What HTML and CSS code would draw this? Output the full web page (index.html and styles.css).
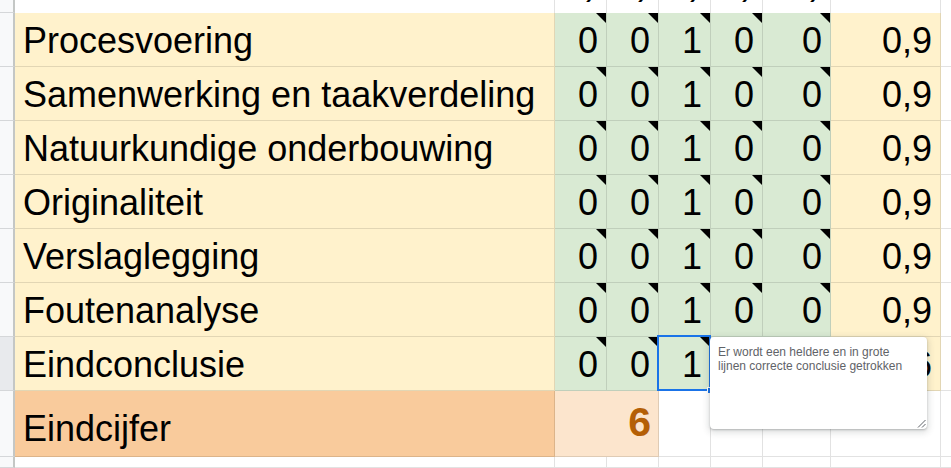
FILE: index.html
```html
<!DOCTYPE html>
<html lang="nl">
<head>
<meta charset="utf-8">
<title>Beoordeling</title>
<link rel="stylesheet" href="styles.css">
</head>
<body>
<div class="sheet">
  <!-- header row (mostly scrolled out) -->
  <div class="gut"></div>
  <div class="c top top-y"></div>
  <div class="c top top-g num"><span>1)</span></div>
  <div class="c top top-g num"><span>2)</span></div>
  <div class="c top top-g num"><span>3)</span></div>
  <div class="c top top-g num"><span>4)</span></div>
  <div class="c top top-g num"><span>5)</span></div>
  <div class="c top top-y"></div>
  <div class="c top"></div>

  <div class="gut"></div>
  <div class="c y lbl">Procesvoering</div>
  <div class="c g num">0<i class="tri"></i></div>
  <div class="c g num">0<i class="tri"></i></div>
  <div class="c g num">1<i class="tri"></i></div>
  <div class="c g num">0<i class="tri"></i></div>
  <div class="c g num">0<i class="tri"></i></div>
  <div class="c y num">0,9</div>
  <div class="c w"></div>

  <div class="gut"></div>
  <div class="c y lbl">Samenwerking en taakverdeling</div>
  <div class="c g num">0<i class="tri"></i></div>
  <div class="c g num">0<i class="tri"></i></div>
  <div class="c g num">1<i class="tri"></i></div>
  <div class="c g num">0<i class="tri"></i></div>
  <div class="c g num">0<i class="tri"></i></div>
  <div class="c y num">0,9</div>
  <div class="c w"></div>

  <div class="gut"></div>
  <div class="c y lbl">Natuurkundige onderbouwing</div>
  <div class="c g num">0<i class="tri"></i></div>
  <div class="c g num">0<i class="tri"></i></div>
  <div class="c g num">1<i class="tri"></i></div>
  <div class="c g num">0<i class="tri"></i></div>
  <div class="c g num">0<i class="tri"></i></div>
  <div class="c y num">0,9</div>
  <div class="c w"></div>

  <div class="gut"></div>
  <div class="c y lbl">Originaliteit</div>
  <div class="c g num">0<i class="tri"></i></div>
  <div class="c g num">0<i class="tri"></i></div>
  <div class="c g num">1<i class="tri"></i></div>
  <div class="c g num">0<i class="tri"></i></div>
  <div class="c g num">0<i class="tri"></i></div>
  <div class="c y num">0,9</div>
  <div class="c w"></div>

  <div class="gut"></div>
  <div class="c y lbl">Verslaglegging</div>
  <div class="c g num">0<i class="tri"></i></div>
  <div class="c g num">0<i class="tri"></i></div>
  <div class="c g num">1<i class="tri"></i></div>
  <div class="c g num">0<i class="tri"></i></div>
  <div class="c g num">0<i class="tri"></i></div>
  <div class="c y num">0,9</div>
  <div class="c w"></div>

  <div class="gut"></div>
  <div class="c y lbl">Foutenanalyse</div>
  <div class="c g num">0<i class="tri"></i></div>
  <div class="c g num">0<i class="tri"></i></div>
  <div class="c g num">1<i class="tri"></i></div>
  <div class="c g num">0<i class="tri"></i></div>
  <div class="c g num">0<i class="tri"></i></div>
  <div class="c y num">0,9</div>
  <div class="c w"></div>

  <div class="gut gut-sel"></div>
  <div class="c y lbl">Eindconclusie</div>
  <div class="c g num">0<i class="tri"></i></div>
  <div class="c g num">0<i class="tri"></i></div>
  <div class="c g num">1<i class="tri"></i><b class="sel"><b class="handle"></b></b></div>
  <div class="c g num">0<i class="tri"></i></div>
  <div class="c g num">0<i class="tri"></i></div>
  <div class="c y num">0,6</div>
  <div class="c w"></div>

  <div class="gut"></div>
  <div class="c o lbl lbl-final">Eindcijfer</div>
  <div class="c lo num grade">6</div>
  <div class="c w"></div>
  <div class="c w"></div>
  <div class="c w"></div>
  <div class="c w"></div>
  <div class="c w"></div>

  <div class="gut"></div>
  <div class="c w"></div>
  <div class="c w"></div>
  <div class="c w"></div>
  <div class="c w"></div>
  <div class="c w"></div>
  <div class="c w"></div>
  <div class="c w"></div>
  <div class="c w"></div>

  <div class="note">
    <p class="note-text">Er wordt een heldere en in grote lijnen correcte conclusie getrokken</p>
    <svg class="grip" width="9" height="9" viewBox="0 0 9 9" aria-hidden="true">
      <path d="M8.5 1 L1 8.5 M8.5 5 L5 8.5" stroke="#5f6368" stroke-width="1" fill="none"/>
    </svg>
  </div>
</div>
</body>
</html>
```

FILE: styles.css
```css
* { box-sizing: border-box; }
html, body {
  margin: 0;
  padding: 0;
  background: #ffffff;
  overflow: hidden;
}
body {
  width: 951px;
  height: 468px;
  font-family: "Liberation Sans", Arial, sans-serif;
}
.sheet {
  position: relative;
  display: grid;
  grid-template-columns: 15px 540px 52px 52px 52px 52px 68px 110px 1fr;
  grid-template-rows: 13px repeat(7, 54px) 66px 1fr;
  width: 951px;
  height: 468px;
}
.gut {
  background: #f8f9fa;
  border-right: 2px solid #c4c7c5;
  border-bottom: 1px solid #d5d7d9;
}
.gut-sel { background: #e8eaed; }

.c {
  position: relative;
  display: flex;
  align-items: flex-end;
  border-right: 1px solid #e2e2e2;
  border-bottom: 1px solid #e2e2e2;
  font-size: 36px;
  line-height: 36px;
  color: #000;
  padding: 0 8px 7px 8px;
  white-space: nowrap;
  overflow: hidden;
}
.top { background: #fff; padding-bottom: 13px; overflow: hidden; }
.top-g { border-bottom-color: #c6d3c1; }
.top-y { border-bottom-color: #e2d6b4; }
.w { background: #fff; }
.y { background: #fff2cc; border-color: #e2d6b4; }
.g { background: #d9ead3; border-color: #c0cfbb; overflow: visible; }
.o { background: #f9cb9c; border-color: #dcb48a; }
.lo { background: #fce5cd; border-color: #dfcbb5; grid-column: span 2; }

.lbl { justify-content: flex-start; }
.lbl-final { padding-bottom: 9px; }
.num { justify-content: flex-end; }
.grade {
  font-weight: bold;
  font-size: 41px;
  line-height: 41px;
  color: #b45f06;
  padding-right: 7px;
  padding-bottom: 13px;
}

.tri {
  position: absolute;
  top: 0;
  right: 0;
  width: 0;
  height: 0;
  border-top: 10px solid #000;
  border-left: 10px solid transparent;
}
.sel {
  position: absolute;
  left: -2px;
  top: -2px;
  right: -1px;
  bottom: -1px;
  border: 2px solid #1a73e8;
  z-index: 2;
}
.handle {
  position: absolute;
  right: -5px;
  bottom: -5px;
  width: 7px;
  height: 7px;
  background: #1a73e8;
  border: 1px solid #fff;
}

.note {
  position: absolute;
  left: 710px;
  top: 337px;
  width: 217px;
  height: 92px;
  background: #fff;
  border-radius: 4px;
  box-shadow: 0 1px 2px rgba(60, 64, 67, 0.3), 0 2px 6px 2px rgba(60, 64, 67, 0.15);
  padding: 9px 8px;
  z-index: 5;
}
.note-text {
  margin: 0;
  font-size: 12px;
  line-height: 13.5px;
  color: #5f6368;
}
.grip {
  position: absolute;
  right: 1px;
  bottom: 1px;
}
```
